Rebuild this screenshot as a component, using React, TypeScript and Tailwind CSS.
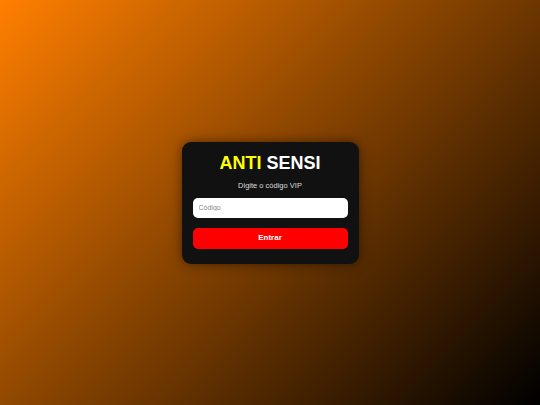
import React from "react";

export default function App() {
  return (
    <div
      className="w-[540px] h-[405px] flex items-center justify-center bg-[linear-gradient(135deg,#ff7f00,#000000)]"
      style={{ fontFamily: '"Liberation Sans", Arial, sans-serif' }}
    >
      <div className="w-[177px] bg-[#111111] rounded-[9px] px-[11px] pt-[11px] pb-[15px] flex flex-col items-center shadow-[0_0_12px_rgba(0,0,0,0.5)]">
        <h1 className="text-[18px] leading-[21px] font-bold text-white">
          <span className="text-[#ffff00]">ANTI</span> SENSI
        </h1>
        <p className="mt-[7px] text-[7.5px] leading-[9px] text-[#dddddd]">Digite o código VIP</p>
        <input
          placeholder="Código"
          className="mt-[8px] w-full h-[20px] bg-white rounded-[5px] px-[6px] text-[7px] text-black placeholder:text-[#888888] outline-none border-0"
        />
        <button className="mt-[10px] w-full h-[21px] bg-[#ff0000] rounded-[5px] text-[8px] font-bold text-white">
          Entrar
        </button>
      </div>
    </div>
  );
}
